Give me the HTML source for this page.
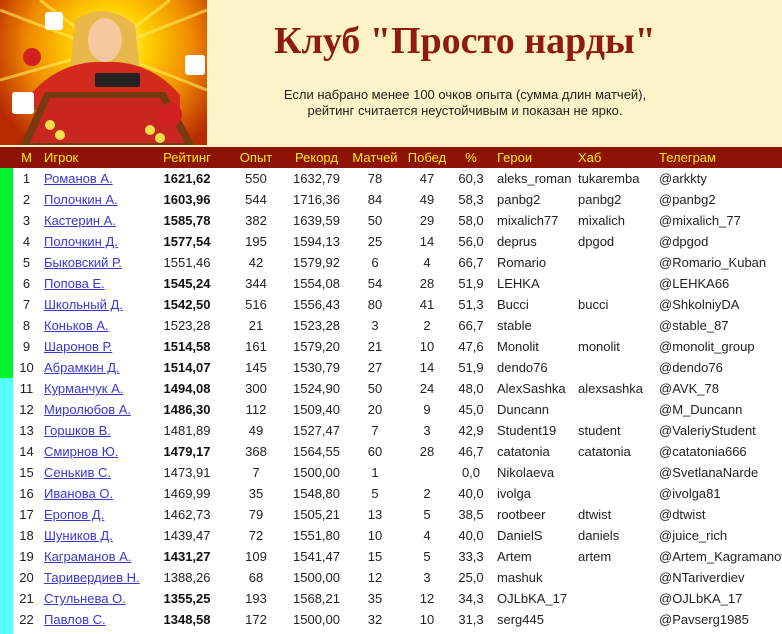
<!DOCTYPE html>
<html><head><meta charset="utf-8"><style>
body{margin:0;width:782px;height:634px;overflow:hidden;background:#fff;font-family:"Liberation Sans",Arial,sans-serif;position:relative}
#top{position:absolute;left:0;top:0;width:782px;height:147px;background:#fdf3c8}
#img{position:absolute;left:0;top:0;width:207px;height:145px;overflow:hidden;background:radial-gradient(circle at 110px 45px,#fff8a0 0,#ffd000 25%,#f08a00 55%,#b82a00 85%)}
h1{position:absolute;left:274px;top:19px;margin:0;font-family:"Liberation Serif",serif;font-size:38px;color:#8e1a10;font-weight:bold;white-space:nowrap}
#sub{position:absolute;left:240px;top:87px;width:450px;text-align:center;font-size:13px;line-height:16px;color:#222}
#strip1{position:absolute;left:0;top:168px;width:13px;height:210px;background:#00f52e}
#strip2{position:absolute;left:0;top:378px;width:13px;height:256px;background:#55ffff}
table{position:absolute;left:0;top:147px;border-collapse:collapse;table-layout:fixed;width:782px;font-size:13px;color:#222}
td,th{height:21px;padding:0;white-space:nowrap;overflow:hidden}
th{background:#8e1206;color:#ffee00;font-weight:normal;font-size:13px}
tr.h th{height:21px}
a{color:#3838d0;text-decoration:underline}
.l{text-align:left;padding-left:4px}
.c{text-align:center}
b{color:#111}
</style></head><body>
<div id="top"></div>
<div id="img"><svg width="207" height="145">
<g stroke="#ffec60" stroke-width="3" opacity=".6"><line x1="105" y1="50" x2="0" y2="10"/><line x1="105" y1="50" x2="207" y2="10"/><line x1="105" y1="50" x2="0" y2="80"/><line x1="105" y1="50" x2="207" y2="90"/><line x1="105" y1="50" x2="40" y2="0"/><line x1="105" y1="50" x2="170" y2="0"/></g>
<path d="M75 20 Q105 0 135 25 L140 70 L70 70Z" fill="#e8b84a"/>
<ellipse cx="105" cy="40" rx="17" ry="22" fill="#f5c8a0"/>
<path d="M30 95 Q60 60 105 62 Q150 60 180 95 L180 110 L30 110Z" fill="#d42a1e"/>
<rect x="95" y="73" width="45" height="14" rx="2" fill="#222"/>
<path d="M20 145 L45 92 L165 92 L195 145Z" fill="#7a3a10"/>
<path d="M30 143 L50 98 L160 98 L185 143Z" fill="#c8261e"/>
<g fill="#f4e04a"><circle cx="50" cy="125" r="5"/><circle cx="60" cy="135" r="5"/><circle cx="150" cy="130" r="5"/><circle cx="160" cy="138" r="5"/></g>
<g fill="#fff"><rect x="45" y="12" width="18" height="18" rx="3"/><rect x="12" y="92" width="22" height="22" rx="3"/><rect x="185" y="55" width="20" height="20" rx="3"/></g>
<circle cx="170" cy="115" r="12" fill="#d02020"/><circle cx="32" cy="57" r="9" fill="#d02020"/>
</svg></div>
<h1>Клуб "Просто нарды"</h1>
<div id="sub">Если набрано менее 100 очков опыта (сумма длин матчей),<br>рейтинг считается неустойчивым и показан не ярко.</div>
<div id="strip1"></div><div id="strip2"></div>
<table>
<colgroup><col style="width:13px"><col style="width:27px"><col style="width:110px"><col style="width:74px"><col style="width:64px"><col style="width:57px"><col style="width:60px"><col style="width:44px"><col style="width:44px"><col style="width:81px"><col style="width:81px"><col style="width:127px"></colgroup>
<tr class="h"><th></th><th class="c">М</th><th class="l">Игрок</th><th class="c">Рейтинг</th><th class="c">Опыт</th><th class="c">Рекорд</th><th class="c">Матчей</th><th class="c">Побед</th><th class="c">%</th><th class="l">Герои</th><th class="l">Хаб</th><th class="l">Телеграм</th></tr>
<tr><td></td><td class="c">1</td><td class="l"><a>Романов А.</a></td><td class="c"><b>1621,62</b></td><td class="c">550</td><td class="c">1632,79</td><td class="c">78</td><td class="c">47</td><td class="c">60,3</td><td class="l">aleks_roman</td><td class="l">tukaremba</td><td class="l">@arkkty</td></tr>
<tr><td></td><td class="c">2</td><td class="l"><a>Полочкин А.</a></td><td class="c"><b>1603,96</b></td><td class="c">544</td><td class="c">1716,36</td><td class="c">84</td><td class="c">49</td><td class="c">58,3</td><td class="l">panbg2</td><td class="l">panbg2</td><td class="l">@panbg2</td></tr>
<tr><td></td><td class="c">3</td><td class="l"><a>Кастерин А.</a></td><td class="c"><b>1585,78</b></td><td class="c">382</td><td class="c">1639,59</td><td class="c">50</td><td class="c">29</td><td class="c">58,0</td><td class="l">mixalich77</td><td class="l">mixalich</td><td class="l">@mixalich_77</td></tr>
<tr><td></td><td class="c">4</td><td class="l"><a>Полочкин Д.</a></td><td class="c"><b>1577,54</b></td><td class="c">195</td><td class="c">1594,13</td><td class="c">25</td><td class="c">14</td><td class="c">56,0</td><td class="l">deprus</td><td class="l">dpgod</td><td class="l">@dpgod</td></tr>
<tr><td></td><td class="c">5</td><td class="l"><a>Быковский Р.</a></td><td class="c">1551,46</td><td class="c">42</td><td class="c">1579,92</td><td class="c">6</td><td class="c">4</td><td class="c">66,7</td><td class="l">Romario</td><td class="l"></td><td class="l">@Romario_Kuban</td></tr>
<tr><td></td><td class="c">6</td><td class="l"><a>Попова Е.</a></td><td class="c"><b>1545,24</b></td><td class="c">344</td><td class="c">1554,08</td><td class="c">54</td><td class="c">28</td><td class="c">51,9</td><td class="l">LEHKA</td><td class="l"></td><td class="l">@LEHKA66</td></tr>
<tr><td></td><td class="c">7</td><td class="l"><a>Школьный Д.</a></td><td class="c"><b>1542,50</b></td><td class="c">516</td><td class="c">1556,43</td><td class="c">80</td><td class="c">41</td><td class="c">51,3</td><td class="l">Bucci</td><td class="l">bucci</td><td class="l">@ShkolniyDA</td></tr>
<tr><td></td><td class="c">8</td><td class="l"><a>Коньков А.</a></td><td class="c">1523,28</td><td class="c">21</td><td class="c">1523,28</td><td class="c">3</td><td class="c">2</td><td class="c">66,7</td><td class="l">stable</td><td class="l"></td><td class="l">@stable_87</td></tr>
<tr><td></td><td class="c">9</td><td class="l"><a>Шаронов Р.</a></td><td class="c"><b>1514,58</b></td><td class="c">161</td><td class="c">1579,20</td><td class="c">21</td><td class="c">10</td><td class="c">47,6</td><td class="l">Monolit</td><td class="l">monolit</td><td class="l">@monolit_group</td></tr>
<tr><td></td><td class="c">10</td><td class="l"><a>Абрамкин Д.</a></td><td class="c"><b>1514,07</b></td><td class="c">145</td><td class="c">1530,79</td><td class="c">27</td><td class="c">14</td><td class="c">51,9</td><td class="l">dendo76</td><td class="l"></td><td class="l">@dendo76</td></tr>
<tr><td></td><td class="c">11</td><td class="l"><a>Курманчук А.</a></td><td class="c"><b>1494,08</b></td><td class="c">300</td><td class="c">1524,90</td><td class="c">50</td><td class="c">24</td><td class="c">48,0</td><td class="l">AlexSashka</td><td class="l">alexsashka</td><td class="l">@AVK_78</td></tr>
<tr><td></td><td class="c">12</td><td class="l"><a>Миролюбов А.</a></td><td class="c"><b>1486,30</b></td><td class="c">112</td><td class="c">1509,40</td><td class="c">20</td><td class="c">9</td><td class="c">45,0</td><td class="l">Duncann</td><td class="l"></td><td class="l">@M_Duncann</td></tr>
<tr><td></td><td class="c">13</td><td class="l"><a>Горшков В.</a></td><td class="c">1481,89</td><td class="c">49</td><td class="c">1527,47</td><td class="c">7</td><td class="c">3</td><td class="c">42,9</td><td class="l">Student19</td><td class="l">student</td><td class="l">@ValeriyStudent</td></tr>
<tr><td></td><td class="c">14</td><td class="l"><a>Смирнов Ю.</a></td><td class="c"><b>1479,17</b></td><td class="c">368</td><td class="c">1564,55</td><td class="c">60</td><td class="c">28</td><td class="c">46,7</td><td class="l">catatonia</td><td class="l">catatonia</td><td class="l">@catatonia666</td></tr>
<tr><td></td><td class="c">15</td><td class="l"><a>Сенькив С.</a></td><td class="c">1473,91</td><td class="c">7</td><td class="c">1500,00</td><td class="c">1</td><td class="c"></td><td class="c">0,0</td><td class="l">Nikolaeva</td><td class="l"></td><td class="l">@SvetlanaNarde</td></tr>
<tr><td></td><td class="c">16</td><td class="l"><a>Иванова О.</a></td><td class="c">1469,99</td><td class="c">35</td><td class="c">1548,80</td><td class="c">5</td><td class="c">2</td><td class="c">40,0</td><td class="l">ivolga</td><td class="l"></td><td class="l">@ivolga81</td></tr>
<tr><td></td><td class="c">17</td><td class="l"><a>Еропов Д.</a></td><td class="c">1462,73</td><td class="c">79</td><td class="c">1505,21</td><td class="c">13</td><td class="c">5</td><td class="c">38,5</td><td class="l">rootbeer</td><td class="l">dtwist</td><td class="l">@dtwist</td></tr>
<tr><td></td><td class="c">18</td><td class="l"><a>Шуников Д.</a></td><td class="c">1439,47</td><td class="c">72</td><td class="c">1551,80</td><td class="c">10</td><td class="c">4</td><td class="c">40,0</td><td class="l">DanielS</td><td class="l">daniels</td><td class="l">@juice_rich</td></tr>
<tr><td></td><td class="c">19</td><td class="l"><a>Каграманов А.</a></td><td class="c"><b>1431,27</b></td><td class="c">109</td><td class="c">1541,47</td><td class="c">15</td><td class="c">5</td><td class="c">33,3</td><td class="l">Artem</td><td class="l">artem</td><td class="l">@Artem_Kagramanov</td></tr>
<tr><td></td><td class="c">20</td><td class="l"><a>Таривердиев Н.</a></td><td class="c">1388,26</td><td class="c">68</td><td class="c">1500,00</td><td class="c">12</td><td class="c">3</td><td class="c">25,0</td><td class="l">mashuk</td><td class="l"></td><td class="l">@NTariverdiev</td></tr>
<tr><td></td><td class="c">21</td><td class="l"><a>Стульнева О.</a></td><td class="c"><b>1355,25</b></td><td class="c">193</td><td class="c">1568,21</td><td class="c">35</td><td class="c">12</td><td class="c">34,3</td><td class="l">OJLbKA_17</td><td class="l"></td><td class="l">@OJLbKA_17</td></tr>
<tr><td></td><td class="c">22</td><td class="l"><a>Павлов С.</a></td><td class="c"><b>1348,58</b></td><td class="c">172</td><td class="c">1500,00</td><td class="c">32</td><td class="c">10</td><td class="c">31,3</td><td class="l">serg445</td><td class="l"></td><td class="l">@Pavserg1985</td></tr>
</table>
</body></html>
